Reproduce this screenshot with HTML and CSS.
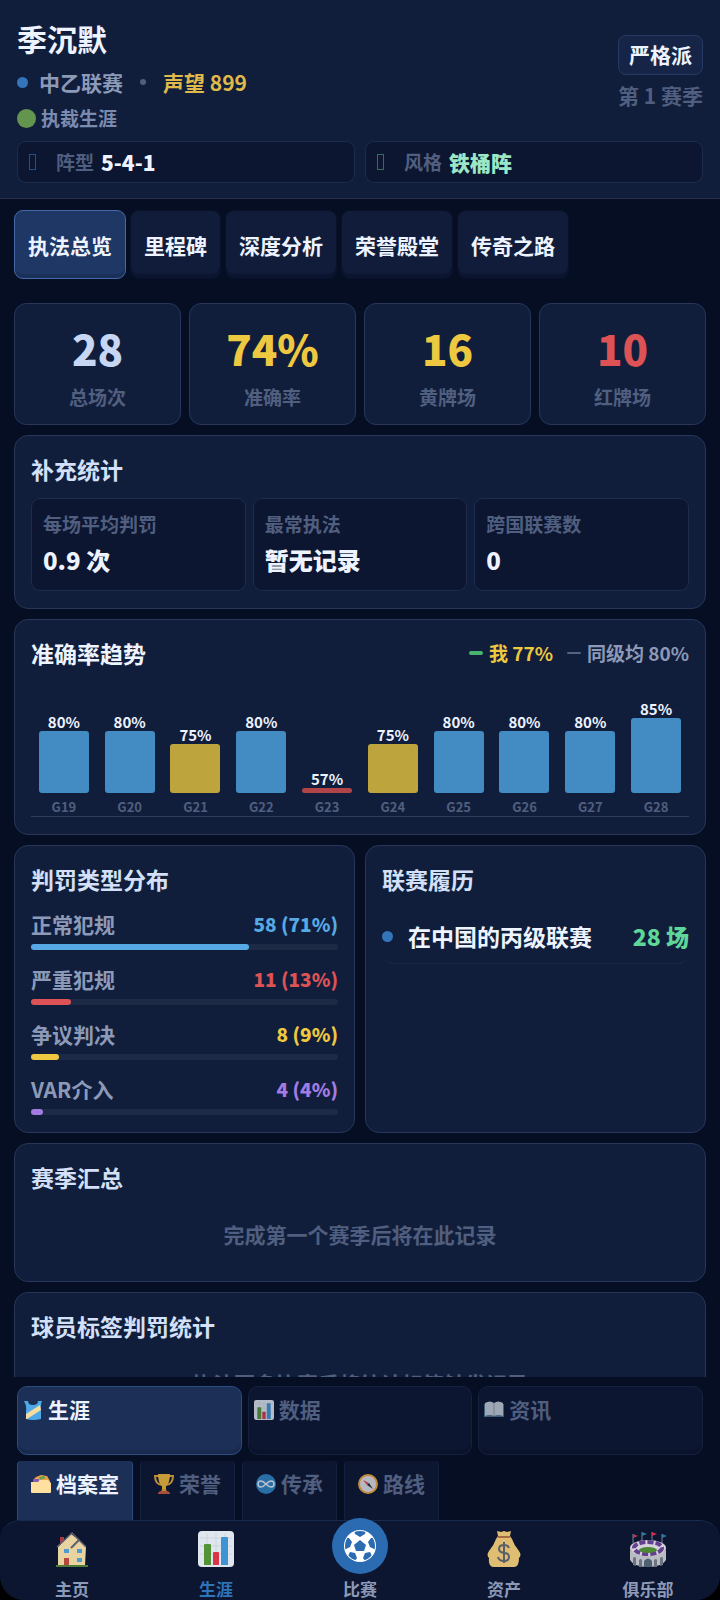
FILE: index.html
```html
<!DOCTYPE html>
<html lang="zh-CN">
<head>
  <meta charset="UTF-8" />
  <meta name="viewport" content="width=device-width, initial-scale=1.0"/>
  <title>执裁生涯</title>
  <link rel="stylesheet" href="styles.css">
</head>
<body>
  <div class="app">
    <header class="header">
      <div class="header-top">
        <div class="profile">
          <h1>季沉默</h1>
          <div class="meta">
            <span class="dot"></span>
            <span>中乙联赛</span>
            <span class="sep"></span>
            <span class="reputation">声望 899</span>
          </div>
          <div class="career"><span class="status"></span>执裁生涯</div>
        </div>
        <div class="season">
          <span class="badge">严格派</span>
          <span class="season-number">第 1 赛季</span>
        </div>
      </div>
      <div class="tactics">
        <div class="tactic"><span class="mark"></span><span class="tactic-label">阵型</span><b>5-4-1</b></div>
        <div class="tactic green"><span class="mark"></span><span class="tactic-label">风格</span><b>铁桶阵</b></div>
      </div>
    </header>

    <main class="content">
      <div class="tabs">
        <button class="tab active">执法总览</button>
        <button class="tab">里程碑</button>
        <button class="tab">深度分析</button>
        <button class="tab">荣誉殿堂</button>
        <button class="tab">传奇之路</button>
      </div>

      <section class="stats">
        <div class="stat"><strong>28</strong><span>总场次</span></div>
        <div class="stat yellow"><strong>74%</strong><span>准确率</span></div>
        <div class="stat yellow"><strong>16</strong><span>黄牌场</span></div>
        <div class="stat red"><strong>10</strong><span>红牌场</span></div>
      </section>

      <section class="card">
        <h2>补充统计</h2>
        <div class="extras">
          <div class="extra"><span>每场平均判罚</span><b>0.9 次</b></div>
          <div class="extra"><span>最常执法</span><b>暂无记录</b></div>
          <div class="extra"><span>跨国联赛数</span><b>0</b></div>
        </div>
      </section>

      <section class="card">
        <div class="card-head">
          <h2 class="bright">准确率趋势</h2>
          <div class="legend">
            <span class="legend-me">我 77%</span>
            <span class="legend-avg">同级均 80%</span>
          </div>
        </div>
        <div class="chart">
          <div class="col"><span>80%</span><div class="bar" style="height: 62px"></div><small>G19</small></div>
          <div class="col"><span>80%</span><div class="bar" style="height: 62px"></div><small>G20</small></div>
          <div class="col"><span>75%</span><div class="bar mid" style="height: 49px"></div><small>G21</small></div>
          <div class="col"><span>80%</span><div class="bar" style="height: 62px"></div><small>G22</small></div>
          <div class="col"><span>57%</span><div class="bar low" style="height: 5px"></div><small>G23</small></div>
          <div class="col"><span>75%</span><div class="bar mid" style="height: 49px"></div><small>G24</small></div>
          <div class="col"><span>80%</span><div class="bar" style="height: 62px"></div><small>G25</small></div>
          <div class="col"><span>80%</span><div class="bar" style="height: 62px"></div><small>G26</small></div>
          <div class="col"><span>80%</span><div class="bar" style="height: 62px"></div><small>G27</small></div>
          <div class="col"><span>85%</span><div class="bar" style="height: 75px"></div><small>G28</small></div>
        </div>
      </section>

      <div class="split">
        <section class="card">
          <h2>判罚类型分布</h2>
          <div class="types">
            <div class="type blue">
              <div class="type-text"><span>正常犯规</span><b>58 (71%)</b></div>
              <div class="track"><div class="fill" style="width: 71%"></div></div>
            </div>
            <div class="type red">
              <div class="type-text"><span>严重犯规</span><b>11 (13%)</b></div>
              <div class="track"><div class="fill" style="width: 13%"></div></div>
            </div>
            <div class="type yellow">
              <div class="type-text"><span>争议判决</span><b>8 (9%)</b></div>
              <div class="track"><div class="fill" style="width: 9%"></div></div>
            </div>
            <div class="type purple">
              <div class="type-text"><span>VAR介入</span><b>4 (4%)</b></div>
              <div class="track"><div class="fill" style="width: 4%"></div></div>
            </div>
          </div>
        </section>
        <section class="card">
          <h2>联赛履历</h2>
          <div class="league"><span class="dot"></span><span>在中国的丙级联赛</span><b>28 场</b></div>
        </section>
      </div>

      <section class="card">
        <h2>赛季汇总</h2>
        <p class="empty">完成第一个赛季后将在此记录</p>
      </section>

      <section class="card">
        <h2>球员标签判罚统计</h2>
        <p class="empty">执法更多比赛后将统计标签触发记录</p>
      </section>
    </main>

    <div class="subnav">
      <div class="groups">
        <button class="group active">
          <svg viewBox="0 0 20 20"><path d="M1 1l4 0q0 4 5 4t5-4l4 0q-2 5-1 10v8q-8 2-15 0v-8q1-5-2-10z" fill="#4fa9e8"/><path d="M3 14L17 5l1 5L4 19H3z" fill="#f5dca0"/></svg>
          生涯
        </button>
        <button class="group">
          <svg viewBox="0 0 36 36"><use href="#chart-icon"/></svg>
          数据
        </button>
        <button class="group">
          <svg viewBox="0 0 20 20"><path d="M0 4h20v13H0z" fill="#4c7290"/><path d="M1 3q5-3 9 0 4-3 9 0v13q-5-2-9 0-4-2-9 0z" fill="#c3ccd6"/><path d="M10 3v13" stroke="#8b97a5"/></svg>
          资讯
        </button>
      </div>
      <div class="pages">
        <button class="page active">
          <svg viewBox="0 0 20 20"><path d="M2 6l3-3 5-2 6 1 3 5-1 4H2z" fill="#f0a04b"/><path d="M2 5h6v3H2z" fill="#8a56b8"/><path d="M8 3l5-1 2 2-6 2z" fill="#65a34c"/><path d="M0 8h7l2-2h8l3 3v9q0 1-1 1H1q-1 0-1-1z" fill="#ffe0a0"/></svg>
          档案室
        </button>
        <button class="page">
          <svg viewBox="0 0 20 20"><path d="M5 2H1q0 8 7 9M15 2h4q0 8-7 9" fill="none" stroke="#b98b35" stroke-width="2"/><path d="M4 0h12q0 9-4 12v3H8v-3Q4 9 4 0z" fill="#c79b3a"/><path d="M8 15h4l1 3H7z" fill="#b98b35"/><path d="M4 20q0-3 4-3h4q4 0 4 3z" fill="#a8503c"/></svg>
          荣誉
        </button>
        <button class="page">
          <svg viewBox="0 0 20 20"><circle cx="10" cy="10" r="10" fill="#2a6ea6"/><path d="M10 10C8 8 7 7 5 7a3 3 0 0 0 0 6c2 0 3-1 5-3s3-3 5-3a3 3 0 0 1 0 6c-2 0-3-1-5-3z" fill="none" stroke="#b9c3d0" stroke-width="1.5"/></svg>
          传承
        </button>
        <button class="page">
          <svg viewBox="0 0 20 20"><circle cx="10" cy="10" r="9" fill="#b4b9c4" stroke="#c58a35" stroke-width="2"/><path d="M5 6l6 3-2 2z" fill="#c23b45"/><path d="M15 15l-6-4 2-2z" fill="#232b3a"/></svg>
          路线
        </button>
      </div>
    </div>

    <nav class="bottom-nav">
      <a href="#">
        <svg viewBox="0 0 36 36"><path d="M6 6h4v9H6z" fill="#a83a45"/><path d="M4 16L17 3q8 5 15 13l-1 18H4z" fill="#e9d3a0"/><path d="M3 16L18 2l14 14" fill="none" stroke="#59606e" stroke-width="1.5"/><path d="M17 17l8-8" stroke="#59606e" stroke-width="2"/><path d="M10 18h5v4h-5zM23 18h5v4h-5zM23 27h5v4h-5z" fill="#4d9cd3"/><path d="M10 27h5v7h-5z" fill="#b24a3c"/><path d="M2 34h32v2H2z" fill="#4e7d38"/></svg>
        <span>主页</span>
      </a>
      <a href="#" class="active">
        <svg viewBox="0 0 36 36">
          <g id="chart-icon"><rect width="36" height="36" rx="4" fill="#dfe6ed"/><path d="M2 7h32M2 15h32M2 23h32M9 2v32M18 2v32M27 2v32" stroke="#cdd5dd"/><path d="M6 14q0-1 1-1h5q1 0 1 1v20H6z" fill="#529336"/><path d="M15 22q0-1 1-1h4q1 0 1 1v12h-6z" fill="#d93549"/><path d="M23 7q0-1 1-1h5q1 0 1 1v27h-7z" fill="#3f93d5"/></g>
        </svg>
        <span>生涯</span>
      </a>
      <a href="#">
        <span class="ball">
          <svg viewBox="0 0 32 32"><defs><clipPath id="ball-clip"><circle cx="16" cy="16" r="15"/></clipPath></defs><circle cx="16" cy="16" r="16" fill="#ffffff"/><g clip-path="url(#ball-clip)" fill="#2a6bb2"><path d="M16 10l6 5-2 6h-8l-2-6z"/><path d="M10 0h12l-1 4-5 3-5-3zM0 8l5 0 3 4-2 5-6 3zM32 8l-5 0-3 4 2 5 6 3zM4 26l2-4 5 1 2 5-3 4zM28 26l-2-4-5 1-2 5 3 4z"/></g></svg>
        </span>
        <span>比赛</span>
      </a>
      <a href="#">
        <svg viewBox="0 0 36 36"><path d="M11 0l4 1 3-1 3 1 4-1-1 5 2 3q2 6 7 12 3 4 0 7 0 9-5 9H8q-6 0-5-9-3-3 0-7 5-6 7-12l2-3z" fill="#dfbd72"/><path d="M12 6h12" stroke="#a96843" stroke-width="2"/><path d="M23 17q-1-3-5-3-5 0-5 4 0 3 5 4 5 0 5 4t-5 4q-5 0-6-4M18 11v21" fill="none" stroke="#596068" stroke-width="2"/></svg>
        <span>资产</span>
      </a>
      <a href="#">
        <svg class="stadium" viewBox="0 0 38 36"><path d="M4 12V3M13 12V1M23 12V1M33 12V3" stroke="#74839a"/><path d="M4 3l5 2-5 2zM23 1l5 2-5 2z" fill="#c93450"/><path d="M13 1l5 2-5 2zM33 3l5 2-5 2z" fill="#34779f"/><path d="M1 17q0 6 18 6t18-6v12q-4 7-18 7T1 29z" fill="#b9bcc2"/><ellipse cx="19" cy="17" rx="18" ry="8" fill="#d4d0dc"/><ellipse cx="19" cy="17" rx="14" ry="6" fill="none" stroke="#633f8e" stroke-width="4" stroke-dasharray="6 2"/><ellipse cx="19" cy="19" rx="9" ry="3" fill="#4c8734"/><path d="M4 34v-7q2-2 3 0v8zM10 36v-7q2-2 3 0v7zM25 36v-7q2-2 3 0v7zM31 35v-8q2-2 3 0v7z" fill="#6c7482"/><path d="M15 36v-6q4-5 8 0v6z" fill="#4e6274"/></svg>
        <span>俱乐部</span>
      </a>
    </nav>
  </div>
</body>
</html>
```
FILE: styles.css
```css
:root {
  --page: #050e22;
  --panel: #111e3b;
  --panel-dark: #0c1631;
  --line: #273659;
  --line-soft: #1d2b4d;
  --text: #edf3ff;
  --title: #d3e0f8;
  --muted: #8c9ab8;
  --faint: #505e7f;
  --blue: #57a9e6;
  --yellow: #edc840;
  --red: #dc5255;
  --green: #5fd699;
  --purple: #a27be3;
}

* {
  margin: 0;
  padding: 0;
  box-sizing: border-box;
}

body {
  background-color: #000;
  color: var(--text);
  font-family: "Noto Sans CJK SC", sans-serif;
  font-size: 21px;
  font-weight: 700;
  line-height: 32px;
}

button {
  font: inherit;
  color: inherit;
  cursor: pointer;
}

.app {
  height: 100vh;
  display: flex;
  flex-direction: column;
  overflow: hidden;
  background-color: var(--page);
  border-radius: 0 0 24px 24px;
}

/* header */
.header {
  padding: 18px 17px 15px;
  background-color: var(--panel);
  border-bottom: 1px solid #29304f;
}

.header-top {
  display: flex;
  justify-content: space-between;
  align-items: flex-start;
}

.profile {
  display: flex;
  flex-direction: column;
  gap: 6px;
}

.profile h1 {
  margin-bottom: 2px;
  font-size: 30px;
  line-height: 40px;
}

.meta {
  display: flex;
  align-items: center;
  color: var(--muted);
}

.dot {
  width: 11px;
  height: 11px;
  border-radius: 50%;
  background-color: #3474b8;
}

.meta .dot {
  margin-right: 11px;
}

.sep {
  width: 6px;
  height: 6px;
  margin: 0 17px;
  border-radius: 50%;
  background-color: var(--faint);
}

.reputation {
  color: #dfb94a;
}

.career {
  display: flex;
  align-items: center;
  gap: 5px;
  font-size: 19px;
  line-height: 28px;
  color: #7b8bb0;
}

.status {
  width: 19px;
  height: 19px;
  border-radius: 50%;
  background-color: #64954f;
}

.season {
  display: flex;
  flex-direction: column;
  align-items: flex-end;
  gap: 6px;
  padding-top: 17px;
}

.badge {
  padding: 2px 10px 4px;
  background-color: #162547;
  border: 1px solid #263a62;
  border-radius: 8px;
}

.season-number {
  line-height: 28px;
  color: var(--faint);
}

.tactics {
  display: grid;
  grid-template-columns: 1fr 1fr;
  gap: 10px;
  margin-top: 9px;
}

.tactic {
  display: flex;
  align-items: center;
  height: 42px;
  padding: 0 11px;
  background-color: var(--panel-dark);
  border: 1px solid var(--line-soft);
  border-radius: 9px;
}

.mark {
  width: 7px;
  height: 16px;
  margin-right: 20px;
  border: 1px solid #24508a;
}

.green .mark {
  border-color: #2f6f62;
}

.tactic-label {
  margin-right: 7px;
  font-size: 19px;
  color: var(--faint);
}

.green b {
  color: #9be6c4;
}

/* content */
.content {
  flex: 1;
  min-height: 0;
  padding: 11px 14px;
  overflow-y: auto;
  scrollbar-width: none;
}

.tabs {
  display: flex;
  gap: 4px;
  margin-bottom: 24px;
}

.tab {
  height: 69px;
  padding: 0 13px;
  background-color: #101c39;
  border: 1px solid #08122a;
  border-radius: 9px;
  box-shadow: inset 0 -4px #0b152f;
}

.tab.active {
  background-color: #1f3765;
  border-color: #4468a8;
  box-shadow: inset 0 -4px #1b3059;
}

.stats {
  display: grid;
  grid-template-columns: repeat(4, 1fr);
  gap: 8px;
  margin-bottom: 10px;
}

.stat {
  display: flex;
  flex-direction: column;
  align-items: center;
  gap: 7px;
  padding: 16px 8px 13px;
  background-color: var(--panel);
  border: 1px solid var(--line);
  border-radius: 12px;
}

.stat strong {
  font-size: 42px;
  line-height: 56px;
  color: #c7d6f3;
}

.stat span {
  font-size: 19px;
  line-height: 28px;
  color: var(--faint);
}

.stat.yellow strong {
  color: var(--yellow);
}

.stat.red strong {
  color: var(--red);
}

.card {
  margin-bottom: 10px;
  padding: 15px 16px 17px;
  background-color: var(--panel);
  border: 1px solid var(--line);
  border-radius: 14px;
}

.card h2 {
  margin-bottom: 11px;
  font-size: 23px;
  line-height: 36px;
  color: var(--title);
}

.extras {
  display: grid;
  grid-template-columns: repeat(3, 1fr);
  gap: 7px;
}

.extra {
  display: flex;
  flex-direction: column;
  gap: 6px;
  padding: 11px 11px 14px;
  background-color: var(--panel-dark);
  border: 1px solid var(--line-soft);
  border-radius: 9px;
}

.extra span {
  font-size: 19px;
  line-height: 28px;
  color: var(--faint);
}

.extra b {
  font-size: 24px;
}

/* accuracy chart */
.card-head {
  display: flex;
  justify-content: space-between;
  align-items: center;
}

.card-head h2 {
  margin-bottom: 0;
}

.card-head .bright {
  color: var(--text);
}

.legend {
  display: flex;
  gap: 14px;
  font-size: 19px;
}

.legend span {
  display: flex;
  align-items: center;
  gap: 6px;
}

.legend span::before {
  content: "";
  width: 14px;
  height: 4px;
  border-radius: 2px;
  background-color: #47b46f;
}

.legend-me {
  color: var(--yellow);
}

.legend-avg {
  color: var(--muted);
}

.legend .legend-avg::before {
  height: 2px;
  background-color: #56637f;
}

.chart {
  display: flex;
  align-items: flex-end;
  height: 146px;
  border-bottom: 1px solid #2d3b5c;
}

.col {
  flex: 1;
  display: flex;
  flex-direction: column;
  align-items: center;
  font-size: 15px;
  line-height: 18px;
}

.bar {
  width: 76%;
  margin-bottom: 5px;
  border-radius: 3px;
  background-color: #438cc3;
}

.bar.mid {
  background-color: #bea43c;
}

.bar.low {
  background-color: #b04449;
}

.col small {
  font-size: 13px;
  color: var(--faint);
}

/* distribution and leagues */
.split {
  display: grid;
  grid-template-columns: 1fr 1fr;
  gap: 10px;
}

.types {
  display: flex;
  flex-direction: column;
  gap: 13px;
}

.type {
  display: flex;
  flex-direction: column;
  gap: 4px;
}

.type-text {
  display: flex;
  justify-content: space-between;
  color: var(--muted);
}

.type.blue { --tone: var(--blue); }
.type.red { --tone: var(--red); }
.type.yellow { --tone: var(--yellow); }
.type.purple { --tone: var(--purple); }

.type b {
  font-size: 19px;
  color: var(--tone);
}

.track {
  height: 6px;
  border-radius: 3px;
  background-color: #1d2a45;
}

.fill {
  height: 100%;
  border-radius: 3px;
  background-color: var(--tone);
}

.league {
  display: flex;
  align-items: center;
  gap: 15px;
  padding: 12px 0 11px;
  border-bottom: 1px solid #1a2848;
  border-radius: 12px;
  font-size: 23px;
}

.league b {
  margin-left: auto;
  color: var(--green);
}

.empty {
  padding: 12px 0 14px;
  text-align: center;
  color: var(--faint);
}

/* section switcher */
.subnav {
  padding: 9px 17px 0;
}

.groups {
  display: grid;
  grid-template-columns: repeat(3, 1fr);
  gap: 6px;
  margin-bottom: 6px;
}

.pages {
  display: flex;
  gap: 7px;
}

.group,
.page {
  display: flex;
  align-items: flex-start;
  gap: 5px;
  background-color: var(--panel-dark);
  border: 1px solid #15213f;
  color: var(--faint);
}

.group {
  height: 69px;
  padding: 6px 5px;
  border-radius: 10px;
  box-shadow: inset 0 -4px #0a132b;
}

.page {
  height: 59px;
  padding: 6px 13px;
  border-top: none;
  border-bottom: none;
  border-radius: 4px 4px 0 0;
}

.group.active,
.page.active {
  background-color: #1c2f56;
  border-color: #2a4c80;
  color: var(--text);
}

.group.active {
  box-shadow: inset 0 -4px #192a4e;
}

.group svg,
.page svg {
  width: 20px;
  height: 20px;
  margin-top: 7px;
}

.group:not(.active) svg {
  opacity: 0.8;
}

/* bottom navigation */
.bottom-nav {
  display: grid;
  grid-template-columns: repeat(5, 1fr);
  height: 80px;
  background-color: var(--panel-dark);
  border-top: 1px solid #182b4e;
  border-radius: 20px 20px 0 0;
}

.bottom-nav a {
  display: flex;
  flex-direction: column;
  align-items: center;
  gap: 12px;
  padding-top: 10px;
  font-size: 17px;
  line-height: 20px;
  color: var(--muted);
  text-decoration: none;
}

.bottom-nav a.active {
  color: #2f73b8;
}

.bottom-nav svg {
  width: 36px;
  height: 36px;
}

.bottom-nav .stadium {
  width: 38px;
}

.ball {
  display: flex;
  align-items: center;
  justify-content: center;
  width: 56px;
  height: 56px;
  margin: -13px 0 -7px;
  border-radius: 50%;
  background-color: #2a6bb2;
}

.bottom-nav .ball svg {
  width: 32px;
  height: 32px;
}
```
